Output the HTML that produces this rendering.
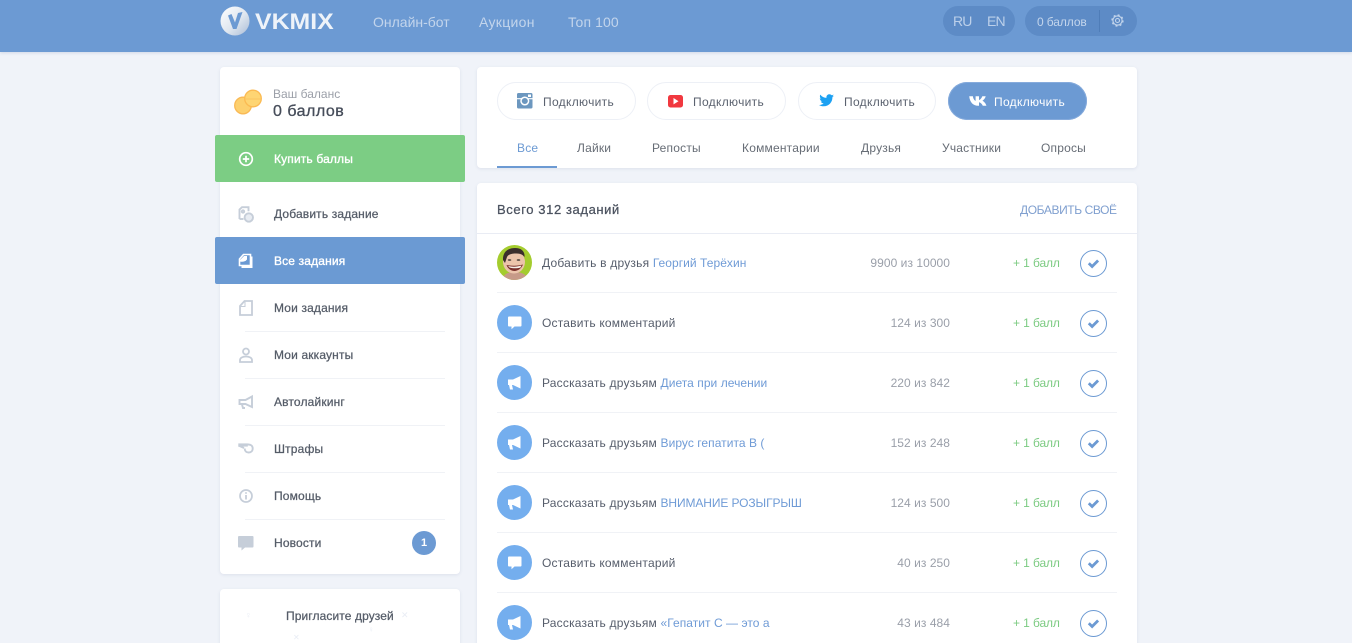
<!DOCTYPE html>
<html lang="ru"><head><meta charset="utf-8"><title>VKMIX</title>
<style>
*{box-sizing:border-box}
html,body{margin:0;padding:0;width:1352px;height:643px;overflow:hidden;background:#f0f3f9}
body{position:relative;font-family:"Liberation Sans",sans-serif;font-size:12px;color:#565d6b}
.a{position:absolute}
.t{position:absolute;white-space:nowrap;line-height:16px;height:16px}
.r{letter-spacing:.2px}
.card{position:absolute;background:#fff;border-radius:4px;box-shadow:0 1px 3px rgba(90,110,150,.13)}
.m{font-weight:normal;-webkit-text-stroke:.25px currentColor;color:#555c68;left:274px;letter-spacing:.15px}
.sep{position:absolute;height:1px;background:#f0f2f6}
.btn{position:absolute;top:82px;height:38px;border:1px solid #edf0f6;border-radius:19px;background:#fff}
.bt{letter-spacing:.32px;top:94px;color:#5b626f}
.tab{position:absolute;top:140px;color:#666c75;white-space:nowrap;line-height:16px;letter-spacing:.2px}
.l{color:#6f9bd6;letter-spacing:.05px}
.n{color:#9a9fa9;text-align:right;width:120px;left:830px;letter-spacing:.05px}
.p{color:#7ccb82;left:1013px;letter-spacing:-.1px}
.c{position:absolute;left:1080px;width:27px;height:27px}
.ic{position:absolute;left:497px;width:35px;height:35px}
svg{display:block;overflow:visible}
</style></head><body>
<svg width="0" height="0" style="position:absolute"><defs>
<g id="cm"><circle cx="17.500" cy="17.500" r="17.500" fill="#74aeee"/><path d="M12 11.500h11.500a1 1 0 0 1 1 1v8a1 1 0 0 1-1 1h-6l-3 2.800v-2.800h-2.500a1 1 0 0 1-1-1v-8a1 1 0 0 1 1-1z" fill="#fff"/></g>
<g id="mg"><circle cx="17.500" cy="17.500" r="17.500" fill="#74aeee"/><path d="M11 14.500h5l7.500-3.500v12.500l-7.500-3.500h-1l1 4.500h-3l-1-4.500h-1z" fill="#fff"/></g>
<g id="ck"><circle cx="13.500" cy="13.500" r="13" fill="none" stroke="#6c9ad3" stroke-width="1"/><path d="M8.800 13.300l3.300 3.200 6-6" fill="none" stroke="#6c9ad3" stroke-width="2.800"/></g>
</defs></svg>

<div class="a" style="left:0;top:0;width:1352px;height:52px;background:#6c9ad3;box-shadow:0 1px 3px rgba(80,110,160,.2)"></div>
<svg class="a" style="left:220px;top:6px" width="30" height="30" viewBox="0 0 30 30"><defs><linearGradient id="lg" x1="0" y1="0" x2="1" y2="1"><stop offset="0" stop-color="#fff"/><stop offset=".55" stop-color="#dfe6ef"/><stop offset="1" stop-color="#a9bcd6"/></linearGradient></defs><circle cx="15" cy="15" r="14.500" fill="url(#lg)"/><path d="M8 9.500l3.500-1.500 3.500 8.500 3-9.500 4.500-1-6 17h-3.500z" fill="#6c9ad3"/></svg>
<div class="t" style="left:255px;top:9px;height:26px;line-height:26px;font-size:22px;font-weight:bold;color:#eef3f9;transform-origin:0 50%;transform:scaleX(1.13)">VKMIX</div>
<div class="t" style="left:373px;top:14px;font-size:14px;color:#c3d5ec">Онлайн-бот</div>
<div class="t" style="left:479px;top:14px;font-size:14px;color:#c3d5ec;letter-spacing:.3px">Аукцион</div>
<div class="t" style="left:568px;top:14px;font-size:14px;color:#c3d5ec;letter-spacing:.1px">Топ 100</div>
<div class="a" style="left:943px;top:6px;width:72px;height:30px;border-radius:15px;background:#5d8bc6"></div>
<div class="t" style="left:953px;top:13px;font-size:14px;color:#bcd0ea;letter-spacing:-.8px">RU</div>
<div class="t" style="left:987px;top:13px;font-size:14px;color:#bcd0ea;letter-spacing:-.9px">EN</div>
<div class="a" style="left:1025px;top:6px;width:112px;height:30px;border-radius:15px;background:#5d8bc6"></div>
<div class="t" style="left:1037px;top:14px;font-size:12px;color:#c3d5ec;letter-spacing:-.1px">0 баллов</div>
<div class="a" style="left:1099px;top:10px;width:1px;height:22px;background:#4f7db8"></div>
<svg class="a" style="left:1111px;top:14px" width="13" height="13" viewBox="0 0 13 13"><circle cx="6.500" cy="6.500" r="2" fill="none" stroke="#c3d5ec" stroke-width="1.100"/><circle cx="6.500" cy="6.500" r="4.600" fill="none" stroke="#c3d5ec" stroke-width="1.100"/><circle cx="6.500" cy="6.500" r="5.500" fill="none" stroke="#c3d5ec" stroke-width="1.300" stroke-dasharray="2 2.320"/></svg>

<!-- sidebar -->
<div class="card" style="left:220px;top:67px;width:240px;height:507px"></div>
<svg class="a" style="left:233px;top:88px" width="30" height="30" viewBox="0 0 30 30"><circle cx="10" cy="17.500" r="8.300" fill="#fdd06e" stroke="#f9b955" stroke-width="1.300"/><circle cx="20" cy="10.500" r="8.300" fill="#fed573" stroke="#fbba52" stroke-width="1.300"/><path d="M12.500 11h15" stroke="#fbc560" stroke-width="1"/></svg>
<div class="t" style="left:273px;top:86px;color:#9b9fa8">Ваш баланс</div>
<div class="t" style="left:273px;top:103px;height:18px;line-height:18px;font-size:16px;color:#464d5a;-webkit-text-stroke:.3px #464d5a;letter-spacing:.5px">0 баллов</div>
<div class="a" style="left:215px;top:135px;width:250px;height:47px;background:#7ccd84;border-radius:2px"></div>
<svg class="a" style="left:238px;top:151px" width="16" height="16" viewBox="0 0 16 16"><circle cx="8" cy="8" r="6.300" fill="none" stroke="#fff" stroke-width="1.700"/><path d="M4.800 8h6.400M8 4.800v6.400" stroke="#fff" stroke-width="1.700"/></svg>
<div class="t m" style="top:151px;color:#fff;-webkit-text-stroke:.35px #fff">Купить баллы</div>

<svg class="a" style="left:238px;top:206px" width="16" height="17" viewBox="0 0 16 17" fill="none" stroke="#c6ced9" stroke-width="1.900"><path d="M1.500 13V3.500L4 1.200h6.500v4"/><path d="M1.500 13h4"/><circle cx="5" cy="5.500" r="1.200"/><circle cx="10.800" cy="11.500" r="4.200" fill="#e8ecf2"/></svg>
<div class="t m" style="top:206px">Добавить задание</div>
<div class="a" style="left:215px;top:237px;width:250px;height:47px;background:#6b9ad3;border-radius:2px"></div>
<svg class="a" style="left:238px;top:253px" width="16" height="16" viewBox="0 0 16 16"><path d="M1.500 6L5.500 1.500h7v11h-11z" fill="#6b9ad3" stroke="#fff" stroke-width="1.600"/><path d="M13.500 3.500v10.500H3.500" fill="none" stroke="#fff" stroke-width="2"/><path d="M2 8.500c2 .5 5 .5 7-2V3h-3L2 7z" fill="#fff"/></svg>
<div class="t m" style="top:253px;color:#fff;-webkit-text-stroke:.35px #fff">Все задания</div>
<svg class="a" style="left:239px;top:300px" width="14" height="16" viewBox="0 0 14 16"><path d="M1 6l4.500-5h7.500v14H1z" fill="none" stroke="#c6ced9" stroke-width="1.800"/><path d="M1 6.500h5V1.500" fill="none" stroke="#c6ced9" stroke-width="1"/></svg>
<div class="t m" style="top:300px">Мои задания</div>
<div class="sep" style="left:245px;top:331px;width:200px"></div>
<svg class="a" style="left:239px;top:347px" width="14" height="16" viewBox="0 0 14 16" fill="none" stroke="#c6ced9" stroke-width="1.800"><circle cx="7" cy="4.500" r="3"/><path d="M1 15v-2c0-2 2.500-3.500 6-3.500s6 1.500 6 3.500v2z"/></svg>
<div class="t m" style="top:347px">Мои аккаунты</div>
<div class="sep" style="left:245px;top:378px;width:200px"></div>
<svg class="a" style="left:238px;top:394px" width="16" height="16" viewBox="0 0 16 16" fill="none" stroke="#c6ced9" stroke-width="1.900"><path d="M1.500 6h6L14 2.500v10.500L7.500 10h-6z"/><path d="M4 10.500l1 3.500h2"/></svg>
<div class="t m" style="top:394px">Автолайкинг</div>
<div class="sep" style="left:245px;top:425px;width:200px"></div>
<svg class="a" style="left:238px;top:443px" width="16" height="11" viewBox="0 0 16 11"><path d="M.3 2h9.500" stroke="#c6ced9" stroke-width="3.200"/><path d="M.5 2.500L6 5M8 1.500h2.500c2.500 0 4.200 1.500 4.200 4s-1.800 4-4 4c-2.400 0-4-1.600-4-4" fill="none" stroke="#c6ced9" stroke-width="1.900"/></svg>
<div class="t m" style="top:441px">Штрафы</div>
<div class="sep" style="left:245px;top:472px;width:200px"></div>
<svg class="a" style="left:239px;top:489px" width="14" height="14" viewBox="0 0 14 14"><circle cx="7" cy="7" r="6" fill="none" stroke="#c6ced9" stroke-width="1.700"/><path d="M7 6v4.500M7 3.200v1.600" stroke="#c6ced9" stroke-width="1.800"/></svg>
<div class="t m" style="top:488px">Помощь</div>
<div class="sep" style="left:245px;top:519px;width:200px"></div>
<svg class="a" style="left:238px;top:536px" width="16" height="15" viewBox="0 0 16 15"><path d="M1 0h13.500a1 1 0 0 1 1 .8v9.700a1 1 0 0 1-1 1H7L3.500 14.500v-3H1a1 1 0 0 1-1-1V1a1 1 0 0 1 1-1z" fill="#c6ced9"/></svg>
<div class="t m" style="top:535px">Новости</div>
<div class="a" style="left:412px;top:531px;width:24px;height:24px;border-radius:12px;background:#6c9ad3;color:#fff;text-align:center;line-height:24px;font-size:11px;font-weight:bold">1</div>

<div class="card" style="left:220px;top:589px;width:240px;height:70px"></div>
<div class="t m" style="left:286px;top:608px;letter-spacing:.1px">Пригласите друзей</div>
<div class="t" style="left:245px;top:607px;font-size:9px;color:#e9edf5">♀</div>
<div class="t" style="left:401px;top:607px;font-size:9px;color:#e9edf5">✕</div>
<div class="t" style="left:368px;top:622px;font-size:8px;color:#e9edf5">♀</div>
<div class="t" style="left:293px;top:630px;font-size:8px;color:#e9edf5">✕</div>

<!-- top panel -->
<div class="card" style="left:477px;top:67px;width:660px;height:101px"></div>
<div class="btn" style="left:497px;width:139px"></div>
<svg class="a" style="left:517px;top:93px" width="16" height="16" viewBox="0 0 16 16"><rect width="15.500" height="15.500" rx="1.500" fill="#6c97bf"/><rect y="5" width="15.500" height="1.300" fill="#fff" opacity=".85"/><circle cx="7.800" cy="8" r="3.800" fill="#6c97bf" stroke="#fff" stroke-width="1.500"/><rect x="11" y="1.500" width="3" height="2.500" fill="#fff"/></svg>
<div class="t bt" style="left:543px">Подключить</div>
<div class="btn" style="left:647px;width:139px"></div>
<svg class="a" style="left:668px;top:95px" width="15" height="13" viewBox="0 0 15 13"><rect width="15" height="12.500" rx="2.500" fill="#f1383f"/><path d="M5.500 3l5 3.200-5 3.200z" fill="#fff"/></svg>
<div class="t bt" style="left:693px">Подключить</div>
<div class="btn" style="left:798px;width:138px"></div>
<svg class="a" style="left:819px;top:94px" width="15" height="13" viewBox="0 0 15 13"><path d="M15 1.700c-.5.300-1.100.4-1.700.5.600-.4 1.100-1 1.300-1.700-.6.400-1.200.6-1.900.8C12.100.6 11.300.200 10.400.200 8.700.200 7.400 1.500 7.400 3.200c0 .2 0 .5.100.7C5 3.800 2.800 2.600 1.300.6 1 1 .9 1.600.9 2.200c0 1 .5 2 1.300 2.500-.5 0-1-.2-1.400-.4 0 1.500 1 2.700 2.400 3-.5.100-.9.200-1.400.1.400 1.200 1.500 2 2.800 2.100C3.500 10.300 2 11 .4 11c-.3 0-.3 0-.4 0 1.300.8 2.900 1.300 4.700 1.300 5.600 0 8.700-4.600 8.700-8.700v-.4c.6-.4 1.100-1 1.600-1.500z" fill="#1da1f2"/></svg>
<div class="t bt" style="left:844px">Подключить</div>
<div class="a" style="left:948px;top:82px;width:139px;height:38px;border-radius:19px;background:#6c9ad3;box-shadow:inset 0 0 0 1px #86abdc"></div>
<svg class="a" style="left:969px;top:96px" width="18" height="10" viewBox="0 0 18 10"><path d="M.2.200h3c.1 2 1.300 4 2.200 4.300V.2h2.800v3.500C9.200 3.500 10.300 2 10.900.2h2.800c-.4 2-1.700 3.500-2.700 4.200 1 .5 2.500 1.900 3.300 4.600h-3C10.600 7.300 9.400 6 8.200 5.800V9H7.500C3.500 9 .7 6 .2.200z" fill="#fff" transform="scale(1.220 1.080)"/></svg>
<div class="t bt" style="left:994px;color:#fff">Подключить</div>

<div class="tab" style="left:517px;color:#6c9ad3">Все</div>
<div class="tab" style="left:577px">Лайки</div>
<div class="tab" style="left:652px">Репосты</div>
<div class="tab" style="left:742px">Комментарии</div>
<div class="tab" style="left:861px">Друзья</div>
<div class="tab" style="left:942px">Участники</div>
<div class="tab" style="left:1041px">Опросы</div>
<div class="a" style="left:497px;top:166px;width:60px;height:2px;background:#6c9ad3"></div>

<!-- list -->
<div class="card" style="left:477px;top:183px;width:660px;height:480px"></div>
<div class="t" style="left:497px;top:202px;font-size:13px;color:#4b525f;-webkit-text-stroke:.25px #4b525f;letter-spacing:.6px">Всего 312 заданий</div>
<div class="t" style="left:1020px;top:202px;color:#7f9fcf;letter-spacing:-.4px">ДОБАВИТЬ СВОЁ</div>
<div class="a" style="left:477px;top:233px;width:660px;height:1px;background:#e9ecf4"></div>

<svg class="ic" style="top:245px" viewBox="0 0 35 35"><defs><clipPath id="av"><circle cx="17.500" cy="17.500" r="17.500"/></clipPath></defs><g clip-path="url(#av)"><rect width="35" height="35" fill="#a4cc2e"/><path d="M5 35C7 28 12 27 18 27s12 2 13 8z" fill="#c79a88"/><ellipse cx="17" cy="17" rx="11" ry="11.500" fill="#ecc4ab"/><path d="M6 15C5.500 7 11 3 18 3s10 4 9.500 9c-2-2.500-4-3.500-8-3.500S11.500 9 10 12l-2 6z" fill="#3b2e2c"/><path d="M9.500 20c3 8 13 8 16.500-.5-5 1.500-11 1.500-16.500.5z" fill="#7a2f2a"/><path d="M11 21c4.500 1 8.500 1 13.500-.5l-1 2c-3.500 1-7.500 1-11 0z" fill="#f6efe8"/><ellipse cx="12.500" cy="15" rx="1.800" ry="1" fill="#6a5a50"/><ellipse cx="21.500" cy="15" rx="1.800" ry="1" fill="#6a5a50"/></g></svg>
<div class="t r" style="left:542px;top:255px">Добавить в друзья <span class="l">Георгий Терёхин</span></div>
<div class="t n" style="top:255px">9900 из 10000</div><div class="t p" style="top:255px">+ 1 балл</div>
<svg class="c" style="top:250px" viewBox="0 0 27 27"><use href="#ck"/></svg>
<div class="sep" style="left:497px;top:292px;width:620px"></div>

<svg class="ic" style="top:305px" viewBox="0 0 35 35"><use href="#cm"/></svg>
<div class="t r" style="left:542px;top:315px">Оставить комментарий</div>
<div class="t n" style="top:315px">124 из 300</div><div class="t p" style="top:315px">+ 1 балл</div>
<svg class="c" style="top:310px" viewBox="0 0 27 27"><use href="#ck"/></svg>
<div class="sep" style="left:497px;top:352px;width:620px"></div>

<svg class="ic" style="top:365px" viewBox="0 0 35 35"><use href="#mg"/></svg>
<div class="t r" style="left:542px;top:375px">Рассказать друзьям <span class="l">Диета при лечении</span></div>
<div class="t n" style="top:375px">220 из 842</div><div class="t p" style="top:375px">+ 1 балл</div>
<svg class="c" style="top:370px" viewBox="0 0 27 27"><use href="#ck"/></svg>
<div class="sep" style="left:497px;top:412px;width:620px"></div>

<svg class="ic" style="top:425px" viewBox="0 0 35 35"><use href="#mg"/></svg>
<div class="t r" style="left:542px;top:435px">Рассказать друзьям <span class="l">Вирус гепатита В (</span></div>
<div class="t n" style="top:435px">152 из 248</div><div class="t p" style="top:435px">+ 1 балл</div>
<svg class="c" style="top:430px" viewBox="0 0 27 27"><use href="#ck"/></svg>
<div class="sep" style="left:497px;top:472px;width:620px"></div>

<svg class="ic" style="top:485px" viewBox="0 0 35 35"><use href="#mg"/></svg>
<div class="t r" style="left:542px;top:495px">Рассказать друзьям <span class="l" style="letter-spacing:-.1px">ВНИМАНИЕ РОЗЫГРЫШ</span></div>
<div class="t n" style="top:495px">124 из 500</div><div class="t p" style="top:495px">+ 1 балл</div>
<svg class="c" style="top:490px" viewBox="0 0 27 27"><use href="#ck"/></svg>
<div class="sep" style="left:497px;top:532px;width:620px"></div>

<svg class="ic" style="top:545px" viewBox="0 0 35 35"><use href="#cm"/></svg>
<div class="t r" style="left:542px;top:555px">Оставить комментарий</div>
<div class="t n" style="top:555px">40 из 250</div><div class="t p" style="top:555px">+ 1 балл</div>
<svg class="c" style="top:550px" viewBox="0 0 27 27"><use href="#ck"/></svg>
<div class="sep" style="left:497px;top:592px;width:620px"></div>

<svg class="ic" style="top:605px" viewBox="0 0 35 35"><use href="#mg"/></svg>
<div class="t r" style="left:542px;top:615px">Рассказать друзьям <span class="l">«Гепатит С — это а</span></div>
<div class="t n" style="top:615px">43 из 484</div><div class="t p" style="top:615px">+ 1 балл</div>
<svg class="c" style="top:610px" viewBox="0 0 27 27"><use href="#ck"/></svg>
</body></html>
